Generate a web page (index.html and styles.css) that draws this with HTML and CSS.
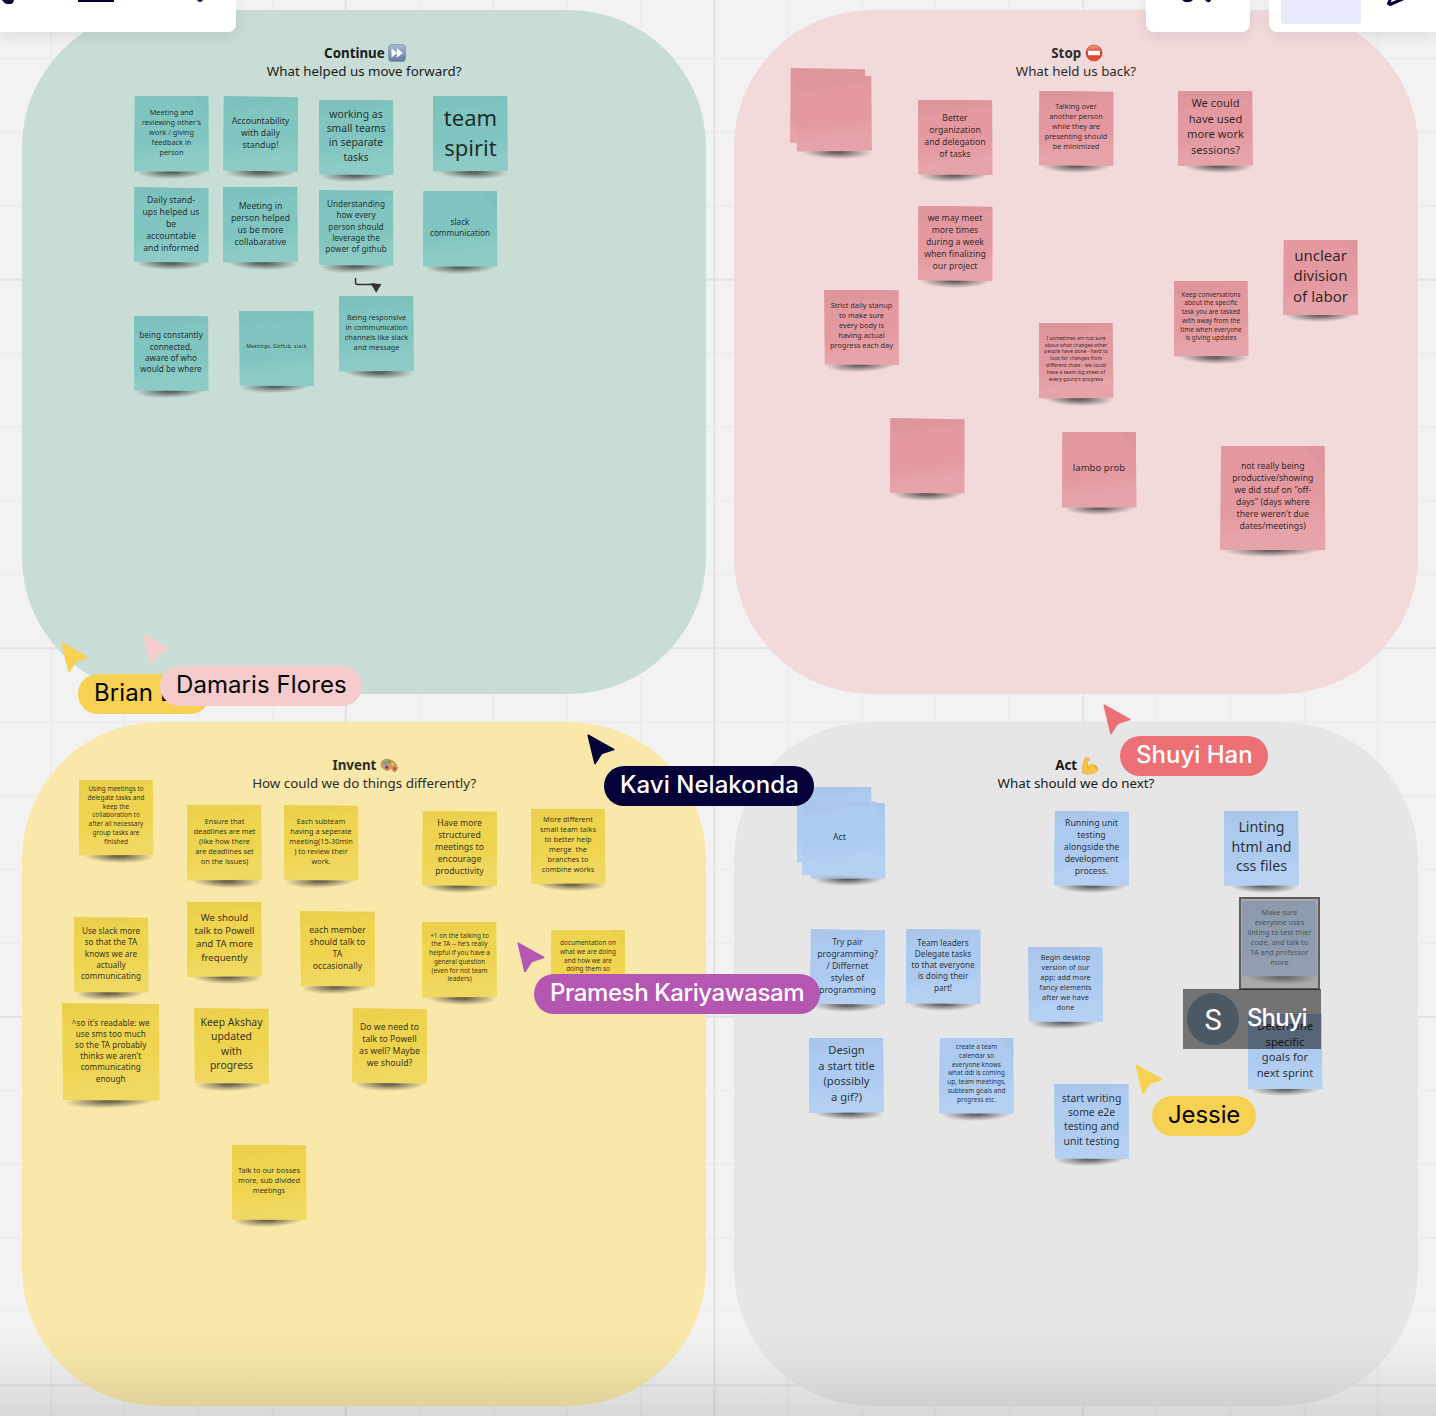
FILE: index.html
```html
<!DOCTYPE html>
<html lang="en">
<head>
<meta charset="utf-8">
<title>Retrospective board</title>
<link rel="stylesheet" href="styles.css">
</head>
<body>
<main class="board">
  <div class="panels">
    <section class="panel panel-teal">
      <h2>Continue <svg class="emoji" viewBox="0 0 18 18"><defs><linearGradient id="ff" x2="0" y2="1"><stop stop-color="#a9bdd8"/><stop offset="1" stop-color="#60799e"/></linearGradient></defs><rect x=".5" y=".5" width="17" height="17" rx="3" fill="url(#ff)" stroke="#7389a8" stroke-width=".6"/><path d="M3.500 4.300l5.300 4.700V4.300l6 4.700-6 4.700V9l-5.300 4.700z" fill="#fff"/></svg></h2>
      <p>What helped us move forward?</p>
    </section>
    <section class="panel panel-pink">
      <h2>Stop <svg class="emoji" viewBox="0 0 18 18"><defs><linearGradient id="ne" x2="0" y2="1"><stop stop-color="#f0a08c"/><stop offset=".5" stop-color="#dd3c1d"/><stop offset="1" stop-color="#e0583a"/></linearGradient></defs><circle cx="9" cy="9" r="8" fill="url(#ne)" stroke="#c9452c" stroke-width=".7"/><rect x="3" y="6.700" width="12" height="4.600" rx=".6" fill="#fff"/></svg></h2>
      <p>What held us back?</p>
    </section>
    <section class="panel panel-yellow">
      <h2>Invent <svg class="emoji" viewBox="0 0 18 18"><path d="M1.200 6.500C2 2.500 6 1.500 10 2.800c5 1.600 8 5.700 7.200 9.200-.5 2.200-2.600 3.500-3.800 2.600-1-.8-.3-2.200-1.500-2.800-1.600-.7-2.500 1.700-4.400 1.500C3.800 13 .4 10.200 1.200 6.500z" fill="#cf9a5a" stroke="#a8773f" stroke-width=".6"/><circle cx="5" cy="6" r="1.500" fill="#37a4e0"/><circle cx="9" cy="4.800" r="1.500" fill="#42a63c"/><circle cx="12.800" cy="7" r="1.400" fill="#e9c935"/><circle cx="6.800" cy="10.200" r="1.600" fill="#6b36b5"/><circle cx="14.500" cy="11.600" r="1.500" fill="#d8402c"/></svg></h2>
      <p>How could we do things differently?</p>
    </section>
    <section class="panel panel-grey">
      <h2>Act <svg class="emoji" viewBox="0 0 18 18"><path d="M4 1.500C5 .5 8 .8 8.600 1.800c.4 1-.2 2-1.200 2.200L6.300 4.200C6 6 6.400 8 7 9.300c1.300-1.600 3.700-2.300 6-1.500 2.600.9 4 3 4 5.200-1.800 2.600-6 4-9.500 4-2.600 0-4.700-.4-6-1.200C1 11 2 5 4 1.500z" fill="#f8c544" stroke="#d99a2c" stroke-width=".6"/><path d="M7 9.300c-.3 1 .2 2 1 2.600M13 8.500c1.500.6 2.200 2 2 3" fill="none" stroke="#c98a22" stroke-width=".8"/></svg></h2>
      <p>What should we do next?</p>
    </section>
  </div>

  <!-- Continue -->
  <div class="note teal t10 va" style="left:134px;top:96px">Meeting and<br>reviewing other's<br>work / giving<br>feedback in<br>person</div>
  <div class="note teal t12 vb" style="left:223px;top:96px">Accountability<br>with daily<br>standup!</div>
  <div class="note teal t14 vc" style="left:318.500px;top:99.500px">working as<br>small teams<br>in separate<br>tasks</div>
  <div class="note teal t30 vd" style="left:433px;top:96px">team<br>spirit</div>
  <div class="note teal t12 vb" style="left:133.500px;top:187px">Daily stand-<br>ups helped us<br>be<br>accountable<br>and informed</div>
  <div class="note teal t12 vd" style="left:223px;top:187px">Meeting in<br>person helped<br>us be more<br>collabarative</div>
  <div class="note teal t11 vc" style="left:318.500px;top:190px">Understanding<br>how every<br>person should<br>leverage the<br>power of github</div>
  <div class="note teal t11 va" style="left:422.500px;top:191px">slack<br>communication</div>
  <div class="note teal t11 vc" style="left:133.500px;top:315.500px">being constantly<br>connected,<br>aware of who<br>would be where</div>
  <div class="note teal t7 wide vc" style="left:239px;top:310.500px">Meetings, GitHub, slack</div>
  <div class="note teal t10 vd" style="left:339px;top:296px">Being responsive<br>in communication<br>channels like slack<br>and message</div>
  <svg class="connector" viewBox="0 0 30 18"><path d="M1.500 1v4.500q0 2 2 2H22" fill="none" stroke="#333" stroke-width="1.500"/><path d="M16.500 6.300l11 .7-5.300 8.800z" fill="#333"/></svg>

  <!-- Stop -->
  <div class="note pink flat vb" style="left:790px;top:68px"></div>
  <div class="note pink vd" style="left:797px;top:76px"></div>
  <div class="note pink t12 vc" style="left:917.500px;top:99.500px">Better<br>organization<br>and delegation<br>of tasks</div>
  <div class="note pink t10 vb" style="left:1038.500px;top:90.500px">Talking over<br>another person<br>while they are<br>presenting should<br>be minimized</div>
  <div class="note pink t15 vd" style="left:1178px;top:90.500px">We could<br>have used<br>more work<br>sessions?</div>
  <div class="note pink t12 vb" style="left:917.500px;top:205.500px">we may meet<br>more times<br>during a week<br>when finalizing<br>our project</div>
  <div class="note pink t20 va" style="left:1283px;top:239.500px">unclear<br>division<br>of labor</div>
  <div class="note pink t10 vc" style="left:824px;top:289.500px">Strict daily stanup<br>to make sure<br>every body is<br>having actual<br>progress each day</div>
  <div class="note pink t9 vd" style="left:1173.500px;top:281px">Keep conversations<br>about the specific<br>task you are tasked<br>with away from the<br>time when everyone<br>is giving updates</div>
  <div class="note pink t7 vd" style="left:1038.500px;top:323px">I sometimes am not sure<br>about what changes other<br>people have done - hard to<br>look for changes from<br>different chats - we could<br>have a team log sheet of<br>every gourp's progress</div>
  <div class="note pink vb" style="left:889.500px;top:418px"></div>
  <div class="note pink t13 va" style="left:1061.500px;top:432px">lambo prob</div>
  <div class="note pink t12 big va" style="left:1220px;top:446px">not really being<br>productive/showing<br>we did stuf on "off-<br>days" (days where<br>there weren't due<br>dates/meetings)</div>

  <!-- Invent -->
  <div class="note yellow t9 vd" style="left:78.500px;top:780px">Using meetings to<br>delegate tasks and<br>keep the<br>collaboration to<br>after all necessary<br>group tasks are<br>finished</div>
  <div class="note yellow t10 vd" style="left:187px;top:805px">Ensure that<br>deadlines are met<br>(like how there<br>are deadlines set<br>on the issues)</div>
  <div class="note yellow t10 vc" style="left:283.500px;top:805px">Each subteam<br>having a seperate<br>meeting(15-30min<br>) to review their<br>work.</div>
  <div class="note yellow t12 vb" style="left:422px;top:810.500px">Have more<br>structured<br>meetings to<br>encourage<br>productivity</div>
  <div class="note yellow t10 vd" style="left:530.500px;top:808.500px">More different<br>small team talks<br>to better help<br>merge&nbsp; the<br>branches to<br>combine works</div>
  <div class="note yellow t11 vc" style="left:73.500px;top:917px">Use slack more<br>so that the TA<br>knows we are<br>actually<br>communicating</div>
  <div class="note yellow t13 vd" style="left:187px;top:901.500px">We should<br>talk to Powell<br>and TA more<br>frequently</div>
  <div class="note yellow t12 vc" style="left:300px;top:911px">each member<br>should talk to<br>TA<br>occasionally</div>
  <div class="note yellow t9 vd" style="left:422px;top:922px">+1 on the talking to<br>the TA -- he's really<br>helpful if you have a<br>general question<br>(even for not team<br>leaders)</div>
  <div class="note yellow t9 va" style="left:550.500px;top:929.500px">documentation on<br>what we are doing<br>and how we are<br>doing them so<br>&nbsp;<br>&nbsp;</div>
  <div class="note yellow t11 mid vc" style="left:62px;top:1003px">^so it's readable: we<br>use sms too much<br>so the TA probably<br>thinks we aren't<br>communicating<br>enough</div>
  <div class="note yellow t14 vc" style="left:194px;top:1008px">Keep Akshay<br>updated<br>with<br>progress</div>
  <div class="note yellow t12 vb" style="left:352px;top:1008px">Do we need to<br>talk to Powell<br>as well? Maybe<br>we should?</div>
  <div class="note yellow t10 vc" style="left:231.500px;top:1144.500px">Talk to our bosses<br>more, sub divided<br>meetings</div>

  <!-- Act -->
  <div class="note blue flat vd" style="left:797px;top:787px"></div>
  <div class="note blue va" style="left:810.500px;top:803px"></div>
  <div class="note blue flat t12 vb" style="left:802px;top:800.500px">Act</div>
  <div class="note blue t12 vb" style="left:1054px;top:810.500px">Running unit<br>testing<br>alongside the<br>development<br>process.</div>
  <div class="note blue t19 vd" style="left:1224px;top:810.500px">Linting<br>html and<br>css files</div>
  <div class="note blue t12 vb" style="left:810px;top:929px">Try pair<br>programming?<br>/ Differnet<br>styles of<br>programming</div>
  <div class="note blue t11 vb" style="left:905.500px;top:928.500px">Team leaders<br>Delegate tasks<br>to that everyone<br>is doing their<br>part!</div>
  <div class="note blue t10 vc" style="left:1028px;top:946.500px">Begin desktop<br>version of our<br>app; add more<br>fancy elements<br>after we have<br>done</div>
  <div class="note blue t15 vd" style="left:809px;top:1037.500px">Design<br>a start title<br>(possibly<br>a gif?)</div>
  <div class="note blue t9 va" style="left:939px;top:1038px">create a team<br>calendar so<br>everyone knows<br>what ddl is coming<br>up, team meetings,<br>subteam goals and<br>progress etc.</div>
  <div class="note blue t14 vc" style="left:1054px;top:1083.500px">start writing<br>some e2e<br>testing and<br>unit testing</div>
  <div class="note blue t10 vd" style="left:1242px;top:901px">Make sure<br>everyone uses<br>linting to test thier<br>code, and talk to<br>TA and professor<br>more</div>
  <div class="note blue t15 va" style="left:1247.500px;top:1013.500px">Determine<br>specific<br>goals for<br>next sprint</div>

  <div class="selection"></div>
  <div class="editor"><span class="avatar">S</span><span class="editor-name">Shuyi</span></div>

  <!-- Live cursors -->
  <div class="cursor c-amber" style="left:61px;top:642px"><svg viewBox="0 0 28 31"><path d="M1.200 1.200l25.500 14.300-12.200 4L8 29.500z"/></svg><span class="brian">Brian L</span></div>
  <div class="cursor c-rose" style="left:143px;top:634px"><svg viewBox="0 0 28 31"><path d="M1.200 1.200l25.500 14.300-12.200 4L8 29.500z"/></svg><span class="damaris">Damaris Flores</span></div>
  <div class="cursor c-navy" style="left:587px;top:734px"><svg viewBox="0 0 28 31"><path d="M1.200 1.200l25.500 14.300-12.200 4L8 29.500z"/></svg><span class="kavi">Kavi Nelakonda</span></div>
  <div class="cursor c-purple" style="left:517px;top:942px"><svg viewBox="0 0 28 31"><path d="M1.200 1.200l25.500 14.300-12.200 4L8 29.500z"/></svg><span class="pramesh">Pramesh Kariyawasam</span></div>
  <div class="cursor c-coral" style="left:1103px;top:704px"><svg viewBox="0 0 28 31"><path d="M1.200 1.200l25.500 14.300-12.200 4L8 29.500z"/></svg><span class="shuyi">Shuyi Han</span></div>
  <div class="cursor c-amber" style="left:1135px;top:1064px"><svg viewBox="0 0 28 31"><path d="M1.200 1.200l25.500 14.300-12.200 4L8 29.500z"/></svg><span class="jessie">Jessie</span></div>

  <div class="fade"></div>

  <header class="toolbars">
    <div class="bar bar-left"><svg width="236" height="32" viewBox="0 0 236 32" fill="#050038"><path d="M2 0h12q-.5 4-4 4H7Q4 3.500 2 0zM78 0h36v2H78zM197 0h6q-1 2-3 2t-3-2z"/></svg></div>
    <div class="bar bar-mid"><svg width="104" height="32" viewBox="0 0 104 32" fill="#050038"><path d="M36 0h11q-2 2.200-5.500 2.200T36 0zM59 0h6q-.8 2.200-2.500 2.200T59 0z"/></svg></div>
    <div class="bar bar-right"><span class="active-tool"></span><svg width="48" height="32" viewBox="0 0 48 32"><path d="M13-2L10.500 3.500 12 4.500 27-2" fill="none" stroke="#050038" stroke-width="3" stroke-linejoin="round"/></svg></div>
  </header>
</main>
</body>
</html>
```
FILE: styles.css
```css
* { box-sizing: border-box; }

body {
  margin: 0;
  overflow: hidden;
  font-family: "Noto Sans", "Open Sans", sans-serif;
  color: #1a1a1a;
}

.board {
  position: relative;
  width: 1436px;
  height: 1416px;
  overflow: hidden;
  background-color: #f2f2f2;
  background-image:
    linear-gradient(90deg, #e3e3e3 2px, transparent 2px),
    linear-gradient(#e3e3e3 2px, transparent 2px),
    linear-gradient(90deg, #ededed 2px, transparent 2px),
    linear-gradient(#ededed 2px, transparent 2px);
  background-size: 368.600px 100%, 100% 368.600px, 73.720px 100%, 100% 73.720px;
  background-position: 344.800px 0, 0 278.700px, 50px 0, 0 57.500px;
}

.panels {
  display: grid;
  grid-template-columns: 684.300px 684.300px;
  grid-template-rows: 684px 684.500px;
  gap: 27.500px;
  padding: 10.400px 0 0 22px;
}

.panel {
  padding-top: 33.600px;
  border-radius: 137px;
  text-align: center;
  font-size: 13.350px;
  line-height: 18.200px;
}
.panel h2, .panel p { margin: 0; font-size: inherit; }
.panel h2 { font-weight: 700; }
.panel-teal { background: #c8ddd5; }
.panel-pink { background: #f3dada; }
.panel-yellow { background: #f9e8a9; }
.panel-grey { background: #e6e6e6; }
.panel-pink, .panel-yellow { color: #2c2c2c; }
.panel-yellow, .panel-grey { padding-top: 34.200px; }
.panel h2 { padding-left: 2px; }

.emoji {
  width: 18px;
  height: 18px;
  margin: -3px 0;
  vertical-align: -3px;
  position: relative;
  top: -1.500px;
}

.note {
  position: absolute;
  isolation: isolate;
  width: 75px;
  height: 75.500px;
  padding-bottom: 4px;
  display: flex;
  align-items: center;
  justify-content: center;
  text-align: center;
  white-space: nowrap;
  color: rgba(18, 18, 18, .88);
}
.note::before {
  content: "";
  position: absolute;
  inset: 0;
  z-index: -1;
  background: linear-gradient(172deg, var(--dark) 0 12%, var(--main) 24% 58%, var(--light) 80%);
}
/* Curled-edge shadow: darkest just below the paper */
.note::after {
  content: "";
  position: absolute;
  left: 3%;
  right: 3%;
  bottom: -7px;
  height: 14px;
  z-index: -2;
  background: radial-gradient(50% 50% at 50% 50%, rgba(20, 20, 20, .62) 15%, rgba(30, 30, 30, .3) 60%, transparent);
  filter: blur(.7px);
}
.note.big { width: 105.500px; height: 104px; }
.note.mid { width: 97.500px; height: 97.500px; }
.note.flat::after { opacity: .15; }

.teal { --dark: #7cc1bb; --main: #80c5bf; --light: #8dcbc6; }
.pink { --dark: #de959c; --main: #e3999f; --light: #e6a4aa; }
.yellow { --dark: #ead04d; --main: #efd44f; --light: #f1d861; }
.blue { --dark: #abc6eb; --main: #adcbf0; --light: #b5d0f3; }

.va::before {
  clip-path: polygon(1% 0, 99% 0, 100% 100%, 0 100%);
  background: linear-gradient(52deg, transparent 86%, var(--dark) 90%), linear-gradient(172deg, var(--main) 55%, var(--light) 80%);
}
.vb::before { clip-path: polygon(1% 0, 100% 1.500%, 100% 100%, 0 99%); }
.vc::before { clip-path: polygon(0 0, 99.500% 1%, 100% 100%, 1% 99.500%); }
.vd::before { clip-path: polygon(0 0, 99% 0, 100% 99%, 0 100%); }
.va::after { transform: rotate(-1deg); }
.vc::after { transform: rotate(-2deg) translateX(-1px); }
.vd::after { transform: rotate(1.500deg) translateX(2px); }

.t7 { font-size: 5.050px; line-height: 6.850px; }
.t7.wide { letter-spacing: .2px; }
.t9 { font-size: 6.450px; line-height: 8.750px; }
.t10 { font-size: 7.350px; line-height: 10px; }
.t11 { font-size: 8.200px; line-height: 11.200px; padding-bottom: 3px; }
.t12 { font-size: 8.700px; line-height: 12px; padding-bottom: 1.600px; }
.t12.big { padding-bottom: 5px; }
.t13 { font-size: 9.600px; line-height: 13.300px; }
.t14 { font-size: 10.400px; line-height: 14.300px; }
.t15 { font-size: 11.200px; line-height: 15.400px; }
.t19 { font-size: 14.200px; line-height: 19.400px; }
.t20 { font-size: 15px; line-height: 20.500px; }
.t30 { font-size: 22px; line-height: 30px; }

.connector {
  position: absolute;
  left: 354px;
  top: 277px;
  width: 30px;
  height: 18px;
}

.selection {
  position: absolute;
  left: 1239px;
  top: 897px;
  width: 81px;
  height: 93px;
  border: 2px solid #5d5d5d;
  background: rgba(110, 110, 110, .5);
}
.editor {
  position: absolute;
  left: 1183px;
  top: 989px;
  width: 138px;
  height: 60px;
  padding: 0 4px;
  display: flex;
  align-items: center;
  gap: 8px;
  background: rgba(0, 0, 0, .5);
  color: #fff;
  font-family: Inter, "Liberation Sans", sans-serif;
}
.avatar {
  width: 52px;
  height: 52px;
  border-radius: 50%;
  background: #4a5964;
  font: 400 29px/54px Roboto, sans-serif;
  text-align: center;
}
.editor-name { font-size: 24px; line-height: 30px; padding-bottom: 3px; font-weight: 500; letter-spacing: -.9px; }

.cursor { position: absolute; }
.cursor svg {
  display: block;
  width: 28px;
  height: 31px;
  fill: var(--c);
  stroke: var(--c);
  stroke-width: 1.600;
  stroke-linejoin: round;
}
.cursor span {
  display: block;
  height: 40px;
  margin: 1px 0 0 17px;
  padding-left: 16px;
  border-radius: 20px;
  background: var(--c);
  color: var(--ink, #fff);
  font: 450 24px/38px Inter, "Liberation Sans", sans-serif;
  white-space: nowrap;
}
.c-amber { --c: #f7d154; --ink: #050505; }
.c-rose { --c: #f6cbcd; --ink: #050505; }
.c-navy { --c: #050038; }
.c-purple { --c: #b556b2; }
.c-coral { --c: #ed7077; }
.cursor .brian { width: 132px; letter-spacing: .1px; font-weight: 400; }
.cursor .damaris { width: 202px; letter-spacing: .08px; font-weight: 400; }
.cursor .kavi { width: 210px; letter-spacing: .05px; }
.cursor .pramesh { width: 286px; letter-spacing: -.4px; }
.cursor .shuyi { width: 148px; }
.cursor .jessie { width: 104px; letter-spacing: -.1px; font-weight: 400; }

.fade {
  position: absolute;
  inset: auto 0 0 0;
  height: 90px;
  background: linear-gradient(transparent, rgba(0, 0, 0, .03) 40%, rgba(0, 0, 0, .11));
}

.toolbars {
  position: absolute;
  inset: 0 0 auto 0;
  height: 32px;
  display: flex;
}
.bar {
  height: 32px;
  background: #fff;
  border-radius: 0 0 8px 8px;
  box-shadow: 0 4px 16px rgba(5, 0, 56, .09);
  display: flex;
}
.bar-left { width: 236px; margin-right: auto; border-bottom-left-radius: 0; }
.bar-mid { width: 104px; margin-right: 19px; }
.bar-right { width: 167px; border-bottom-right-radius: 0; padding-left: 12px; gap: 17px; }
.active-tool { width: 80px; height: 24px; border-radius: 0 0 4px 4px; background: #e8eafc; }
```
